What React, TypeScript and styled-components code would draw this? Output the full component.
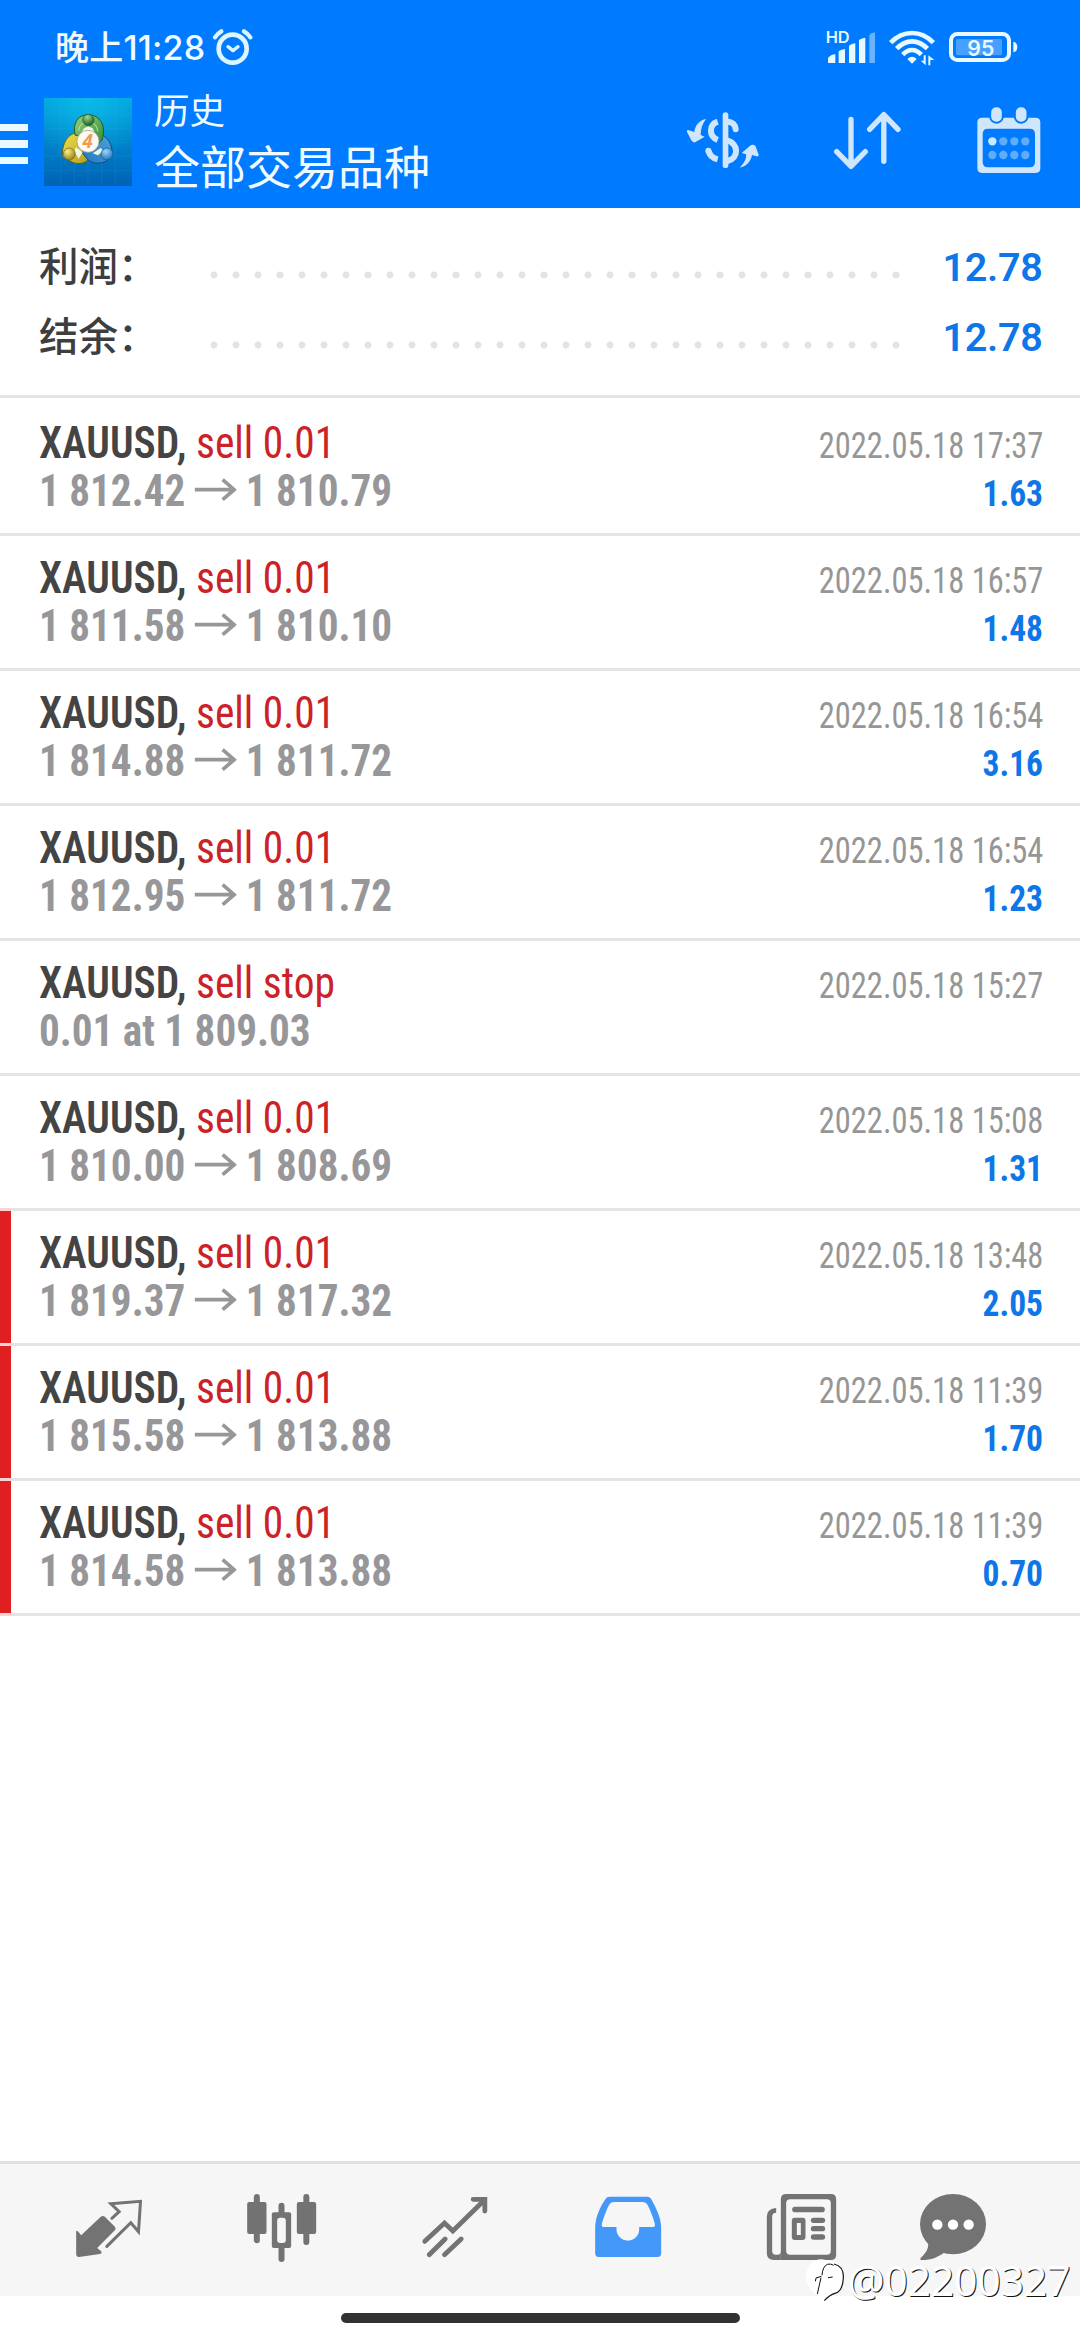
import React from 'react';
import styled, { createGlobalStyle } from 'styled-components';

const BLUE = '#007aff';
const GRAY = '#737373';
const CJK = "'Noto Sans CJK SC', sans-serif";

const Global = createGlobalStyle`
  html, body { margin: 0; background: #fff; }
  *, *::before, *::after { box-sizing: border-box; }
  svg { display: block; flex: none; }
`;

const Screen = styled.div`
  position: relative;
  display: flex;
  flex-direction: column;
  width: 1080px;
  height: 2340px;
  overflow: hidden;
  background: #fff;
  font-family: Roboto, ${CJK};
  white-space: nowrap;
`;

/* ---------- header ---------- */

const Header = styled.header`
  flex: none;
  height: 208px;
  background: ${BLUE};
  color: #f0fbff;
`;

const StatusBar = styled.div`
  display: flex;
  align-items: center;
  height: 94px;
  padding: 0 62px 0 55px;
`;

const Clock = styled.span`
  width: 149px;
  height: 92px;
  margin-right: 8px;
  font: 500 34px/94px Inter, ${CJK};
  letter-spacing: 0.2px;
`;

const StatusIcons = styled.div`
  display: flex;
  align-items: center;
  margin-left: auto;
  gap: 11px;
`;

const Toolbar = styled.div`
  display: flex;
  align-items: center;
  height: 96px;
  padding-right: 36px;
`;

const MenuButton = styled.div`
  display: flex;
  flex-direction: column;
  gap: 9.3px;
  width: 27.5px;
  margin: 4px 16.5px 0 0;
`;

const MenuLine = styled.i`
  height: 7.3px;
  background: #e9f9ff;
`;

const Titles = styled.div`
  margin: -4px auto 0 22px;
  font-family: ${CJK};
`;

const Caption = styled.div`
  font-size: 35.5px;
  line-height: 48px;
`;

const Title = styled.div`
  font-size: 46px;
  line-height: 62px;
`;

const Actions = styled.div`
  display: flex;
  align-items: center;
  gap: 70px;
  margin-top: -3px;
`;

/* ---------- summary ---------- */

const Summary = styled.section`
  flex: none;
  height: 190px;
  padding: 24px 37.5px 0 39px;
  border-bottom: 3px solid #e4e4e4;
`;

const SummaryRow = styled.div`
  display: flex;
  align-items: center;
  height: 70px;
`;

const SummaryLabel = styled.span`
  width: 163.5px;
  margin-top: -6px;
  font: 500 39.5px/70px ${CJK};
  color: #3e3e3e;
`;

const Dots = styled.span`
  width: 704px;
  height: 8px;
  margin-top: 15px;
  background: radial-gradient(circle at 50% 50%, #e3e3e3 3.1px, transparent 3.9px) 0 0 / 22px 8px repeat-x;
`;

const SummaryValue = styled.span`
  margin: 2px 0 0 auto;
  font: 600 39.5px/70px Roboto, sans-serif;
  letter-spacing: -0.3px;
  color: #0f76e8;
`;

/* ---------- deals ---------- */

const List = styled.section`
  flex: 1;
  padding-top: 3px;
`;

const Row = styled.article<{ $marked?: boolean; $edge?: boolean }>`
  height: 135px;
  padding: 19px 37px 0 39px;
  background:
    linear-gradient(${p => (p.$marked ? '#e01f20, #e01f20' : 'transparent, transparent')}) 0 0 / 11px 132px no-repeat,
    linear-gradient(${p => (p.$edge ? '#f9d3d3, #f9d3d3' : '#e4e4e4, #e4e4e4')}) 0 132px / 11px 3px no-repeat,
    linear-gradient(#e4e4e4, #e4e4e4) 0 132px / 100% 3px no-repeat;
  font-family: 'Roboto Condensed', Roboto, sans-serif;
`;

const Line = styled.div`
  display: flex;
  align-items: baseline;
  justify-content: space-between;
  height: 48px;
  line-height: 48px;
`;

const Squeeze = styled.span<{ $x: number; $from?: string }>`
  display: inline-block;
  transform: scaleX(${p => p.$x});
  transform-origin: ${p => p.$from || 'left'} center;
`;

const Deal = styled(Squeeze)`
  font-size: 43.5px;
  color: #cc2127;
`;

const Symbol = styled.b`
  font-weight: 650;
  color: #444;
`;

const Price = styled(Squeeze)`
  font-size: 43.5px;
  font-weight: 700;
  color: #97979a;
`;

const Time = styled(Squeeze)`
  font-size: 36.5px;
  font-weight: 400;
  color: #969696;
`;

const Profit = styled(Squeeze)`
  font-size: 36px;
  font-weight: 700;
  color: #0f76e8;
`;

const ArrowSvg = styled.svg`
  display: inline-block;
  width: 45.5px;
  height: 23.3px;
  margin: 0 9.5px 0 9px;
  vertical-align: 5px;
`;

/* ---------- bottom ---------- */

const TabBar = styled.nav`
  flex: none;
  display: flex;
  align-items: center;
  height: 135px;
  padding-left: 22px;
  border-top: 3px solid #e0e0e0;
  background: #f6f6f6;
`;

const Tab = styled.div<{ $w?: number }>`
  display: flex;
  justify-content: center;
  width: ${p => p.$w || 173}px;
`;

const GestureArea = styled.div`
  flex: none;
  display: flex;
  justify-content: center;
  height: 44px;
  padding-top: 17px;
`;

const GestureBar = styled.div`
  width: 399px;
  height: 10px;
  border-radius: 5px;
  background: #323232;
`;

const Watermark = styled.div`
  position: absolute;
  left: 805px;
  top: 2256px;
  display: flex;
  align-items: center;
  gap: 1px;
  font: 400 41px/48px 'Noto Sans', sans-serif;
  letter-spacing: -0.2px;
  color: #fff;
  text-shadow: 1px 1px 0 #111;
`;

/* ---------- icons ---------- */

const AlarmIcon = () => (
  <svg width="42" height="40" viewBox="636 80 126 120" fill="none" stroke="#dcf5ff" strokeLinecap="round">
    <circle cx="698" cy="145" r="42" strokeWidth="14" />
    <path d="M684 139L699 151L714 139" strokeWidth="10" strokeLinejoin="round" />
    <path d="M645 111Q652 100 664 93M751 111Q744 100 732 93" strokeWidth="13" />
  </svg>
);

const SignalIcon = () => (
  <svg width="53.3" height="40" viewBox="490 81 160 120" fill="#e8f9ff">
    <text x="495" y="129" fontFamily="Inter, sans-serif" fontSize="47" fontWeight="600" textLength="72" lengthAdjust="spacingAndGlyphs">HD</text>
    <path d="M502 189V174Q510 164 524 163V189ZM534 189V154Q542 148 553 147V189ZM565 189V137Q573 131 584 130V189ZM595 189V120Q603 114 614 113V189Z" />
    <path d="M626 189V105Q633 99 643 97V189Z" opacity=".45" />
  </svg>
);

const WifiIcon = () => (
  <svg width="48.7" height="40" viewBox="680 81 146 120" fill="none" stroke="#e8f9ff" strokeWidth="14">
    <path d="M688 128Q716 99 752 99Q788 99 816 128" />
    <path d="M706 146Q727 124 752 124Q777 124 798 146" />
    <path d="M724 164Q738 150 752 150Q766 150 780 164" />
    <path d="M738 177Q752 164 766 177L752 191Z" fill="#e8f9ff" stroke="none" />
    <path d="M793 166V196L778 182H787V166ZM801 196V166L819 180H807V196Z" fill="#e8f9ff" stroke="none" />
  </svg>
);

const BatteryIcon = () => (
  <svg width="70" height="40" viewBox="864 81 210 120">
    <rect x="873" y="102" width="174" height="78" rx="19" fill="none" stroke="#e8f9ff" strokeWidth="12" />
    <path d="M1060 125Q1072 127 1072 141Q1072 155 1060 157Z" fill="#e8f9ff" />
    <rect x="888" y="117" width="138" height="49" rx="4" fill="#fff" opacity=".28" />
    <text x="922" y="167" fill="#e8f9ff" fontFamily="Inter, sans-serif" fontSize="64" fontWeight="600" textLength="81" lengthAdjust="spacingAndGlyphs">95</text>
  </svg>
);

const AppIcon = () => (
  <svg width="88" height="88" viewBox="12 12 264 264">
    <defs>
      <linearGradient id="bg" x1="0" y1="0" x2="0" y2="1">
        <stop offset="0" stopColor="#00a4dc" />
        <stop offset=".5" stopColor="#0083cc" />
        <stop offset="1" stopColor="#0062b4" />
      </linearGradient>
      <radialGradient id="shine" cx=".5" cy="0" r=".7">
        <stop offset="0" stopColor="#10c4ee" stopOpacity=".7" />
        <stop offset="1" stopColor="#10c4ee" stopOpacity="0" />
      </radialGradient>
      <linearGradient id="gl" x1="0" y1="0" x2="1" y2="1"><stop offset="0" stopColor="#9ad07c" /><stop offset="1" stopColor="#2f8a3c" /></linearGradient>
      <linearGradient id="yl" x1="0" y1="0" x2="1" y2="1"><stop offset="0" stopColor="#efe050" /><stop offset="1" stopColor="#b39d1c" /></linearGradient>
      <linearGradient id="bb" x1="1" y1="0" x2="0" y2="1"><stop offset="0" stopColor="#4fa4dc" /><stop offset="1" stopColor="#2077bd" /></linearGradient>
      <radialGradient id="gr" cx=".4" cy=".25" r=".75"><stop offset="0" stopColor="#a4d88e" /><stop offset="1" stopColor="#155f26" /></radialGradient>
      <radialGradient id="ye" cx=".35" cy=".3" r=".75"><stop offset="0" stopColor="#f8f08c" /><stop offset="1" stopColor="#968010" /></radialGradient>
      <radialGradient id="bl" cx=".4" cy=".3" r=".75"><stop offset="0" stopColor="#9ad6fa" /><stop offset="1" stopColor="#1a72ba" /></radialGradient>
    </defs>
    <rect x="12" y="12" width="264" height="264" fill="url(#bg)" />
    <rect x="12" y="12" width="264" height="264" fill="url(#shine)" />
    <path d="M62 12V276M103 12V276M144 12V276M185 12V276M226 12V276M12 63H276M12 104H276M12 145H276M12 186H276M12 230H276" stroke="#5cc4f0" strokeWidth="1.5" opacity=".2" />
    <path d="M68 188C64 150 84 114 118 116L150 150L146 196C134 210 112 212 96 204Z" fill="url(#yl)" stroke="#5f6418" strokeWidth="3" />
    <path d="M168 116C204 122 222 158 214 184C206 206 166 218 142 196L124 172L176 150Z" fill="url(#bb)" stroke="#114a80" strokeWidth="3" />
    <path d="M106 124C96 92 112 62 145 62C180 62 200 96 186 138L168 156L112 124Z" fill="url(#gl)" stroke="#1a5c2a" strokeWidth="3" />
    <path d="M116 110C118 92 130 84 145 84C162 84 172 96 173 112" fill="none" stroke="#c2e8a8" strokeWidth="3" />
    <path d="M132 103L145 97L158 103L164 116H124ZM102 172L108 160L128 174L116 194ZM190 170L182 162L158 178L174 184Z" fill="#eef6e4" />
    <circle cx="145" cy="78" r="17" fill="url(#gr)" stroke="#17612a" strokeWidth="2" />
    <circle cx="88" cy="180" r="18" fill="url(#ye)" stroke="#7c6a14" strokeWidth="2" />
    <circle cx="201" cy="180" r="18" fill="url(#bl)" stroke="#145a98" strokeWidth="2" />
    <circle cx="144" cy="142" r="33" fill="#fdfaf5" stroke="#a9a788" strokeWidth="2.500" />
    <text x="143" y="162" textAnchor="middle" fontFamily="'Open Sans', sans-serif" fontStyle="italic" fontWeight="700" fontSize="56" fill="#f29a50">4</text>
  </svg>
);

const CurrencyIcon = () => (
  <svg width="76.7" height="60" viewBox="70 330 230 180" fill="#cfe6fd">
    <rect x="186" y="337" width="17" height="167" rx="8.5" />
    <g fill="none" stroke="#cfe6fd" strokeWidth="18">
      <path d="M200 365C215 365 224 374 225 388" strokeLinecap="round" />
      <path d="M171 365C144 374 144 409 171 420" />
      <path d="M144 452C146 468 155 474 171 478" />
      <path d="M200 421C234 432 236 474 200 483" />
      <path d="M143 452V453" strokeLinecap="round" />
    </g>
    <path d="M136 357C118 360 103 375 101 396L82 390Q77 390 79 396L92 421Q96 428 103 427L132 410L120 405C120 385 126 370 136 357Z" />
    <path d="M237 503C252 488 258 475 256 463L243 459L270 436Q277 432 284 437L294 464Q294 470 288 469L274 465C270 485 256 500 237 503Z" />
  </svg>
);

const SortIcon = () => (
  <svg width="73.3" height="63.3" viewBox="506 330 220 190" fill="none" stroke="#cfe6fd" strokeWidth="16" strokeLinecap="round" strokeLinejoin="round">
    <path d="M566 361V500M523 458L566 502L609 458" />
    <path d="M664.500 487V350M622 391L664.500 347L707 391" />
  </svg>
);

const CalendarIcon = () => (
  <svg width="70" height="72.300" viewBox="941 313 210 217">
    <path fillRule="evenodd" fill="#cfe6fd" d="M965 354H1126Q1140 354 1140 368V506Q1140 520 1126 520H965Q951 520 951 506V368Q951 354 965 354ZM983 387Q967 387 967 403V487Q967 503 983 503H1108Q1124 503 1124 487V403Q1124 387 1108 387Z" />
    {[1008.5, 1082.5].map(x => (
      <rect key={x} x={x - 19} y="320" width="38" height="49" rx="18" fill="#cfe6fd" stroke={BLUE} strokeWidth="6" />
    ))}
    {[425, 466].map(y => [996, 1029, 1062, 1095].map(x => (
      <circle key={`${x}${y}`} cx={x} cy={y} r="12.500" fill={x === 996 && y === 425 ? '#c4ebff' : '#5fadf9'} />
    )))}
  </svg>
);

const Arrow = () => (
  <ArrowSvg viewBox="585 667 130 70" preserveAspectRatio="none" fill="none" stroke="#97979a" strokeWidth="11">
    <path d="M587 702H706M671 672L706 702L671 732" />
  </ArrowSvg>
);

const QuotesIcon = () => (
  <svg width="80" height="80" viewBox="25.5 30 240 240">
    <path fill={GRAY} d="M47 154Q48 150 52 154L62 166L120 111Q127 105 133 110L163 140Q168 146 163 151L110 204L122 214Q126 220 118 222L56 231Q47 231 47 222Z" />
    <path fill="none" stroke={GRAY} strokeWidth="9" strokeLinecap="round" d="M154 115L176 95L151 71L240 64L234 155L211 128L139 199" />
  </svg>
);

const CandlesIcon = () => (
  <svg width="80" height="80" viewBox="544.5 30 240 240" fill={GRAY}>
    <rect x="560" y="66" width="58" height="96" rx="6" />
    <rect x="580" y="42" width="18" height="148" rx="9" />
    <rect x="709" y="66" width="58" height="96" rx="6" />
    <rect x="728.500" y="42" width="18" height="153" rx="9" />
    <rect x="654" y="68" width="18" height="60" rx="9" />
    <rect x="654" y="170" width="18" height="76" rx="9" />
    <rect x="634" y="97" width="58" height="107" rx="6" />
    <rect x="650" y="113" width="26" height="76" rx="9" fill="#f6f6f6" />
  </svg>
);

const TradeIcon = () => (
  <svg width="80" height="80" viewBox="43.5 30 240 240" fill="none" stroke={GRAY} strokeWidth="14.500">
    <path d="M73 184L132 129L157 153L252 60" strokeLinecap="round" />
    <path d="M218 58H253V93" strokeLinecap="round" />
    <path d="M86 224L134 177M132 224L182 177" strokeLinecap="round" />
  </svg>
);

const HistoryIcon = () => (
  <svg width="80" height="80" viewBox="562.5 30 240 240">
    <path
      fill="#4499f8"
      fillRule="evenodd"
      d="M627 50H740Q748 50 752 57C770 90 782 115 782 145V220Q782 231 771 231H595Q584 231 584 220V145C584 115 596 85 615 57Q619 50 627 50ZM640 66Q630 66 626 74C617 92 609 112 604 131Q602 141 611 141H648V148A34 34 0 0 0 716 148V141H756Q765 141 763 131C758 112 750 92 741 74Q737 66 727 66Z"
    />
  </svg>
);

const NewsIcon = () => (
  <svg width="80" height="80" viewBox="61.5 30 240 240" fill={GRAY}>
    <path fillRule="evenodd" d="M137 42H271Q287 42 287 58V224Q287 240 271 240H121V58Q121 42 137 42ZM149 58Q137 58 137 70V212Q137 224 149 224H259Q271 224 271 212V70Q271 58 259 58Z" />
    <path d="M107 84V98Q95 98 95 110V213Q95 224 106 224H112Q121 224 121 213V240H100Q79 240 79 219V110Q79 86 107 84Z" />
    <rect x="155" y="80" width="98" height="17" rx="8.500" />
    <path fillRule="evenodd" d="M163 113H186Q195 113 195 122V171Q195 180 186 180H163Q154 180 154 171V122Q154 113 163 113ZM169 129V165H181V129Z" />
    {[113, 138, 163].map(y => <rect key={y} x="211" y={y} width="43" height="16" rx="8" />)}
  </svg>
);

const ChatIcon = () => (
  <svg width="80" height="80" viewBox="519 30 240 240" fill={GRAY}>
    <ellipse cx="639" cy="132.500" rx="99" ry="90.500" />
    <path d="M562 180C570 200 560 218 542 234Q539 240 545 240C575 240 592 232 612 218Z" />
    {[592, 639, 686].map(x => <circle key={x} cx={x} cy="134" r="15.500" fill="#fff" />)}
  </svg>
);

const WatermarkLogo = () => (
  <svg width="41.700" height="45" viewBox="195 245 125 135" fill="none" stroke="#111" strokeWidth="3.500">
    <path d="M245 249C215 249 199 272 199 300C199 335 222 358 250 358L253 372Q268 356 285 351Q310 342 310 300Q310 262 280 255Z" fill="#fff" stroke="none" />
    <path d="M282 263Q312 270 310 305Q308 345 285 351Q268 356 253 373" />
    <path d="M246 297Q248 270 262 264Q272 261 281 267M244 300L228 305L226 315M243 304L232 353M264 304L278 302" strokeWidth="3" />
  </svg>
);

/* ---------- data ---------- */

interface DealItem {
  action: string;
  open: string;
  close?: string;
  time: string;
  profit?: string;
  marked?: boolean;
}

const deals: DealItem[] = [
  { action: 'sell 0.01', open: '1 812.42', close: '1 810.79', time: '2022.05.18 17:37', profit: '1.63' },
  { action: 'sell 0.01', open: '1 811.58', close: '1 810.10', time: '2022.05.18 16:57', profit: '1.48' },
  { action: 'sell 0.01', open: '1 814.88', close: '1 811.72', time: '2022.05.18 16:54', profit: '3.16' },
  { action: 'sell 0.01', open: '1 812.95', close: '1 811.72', time: '2022.05.18 16:54', profit: '1.23' },
  { action: 'sell stop', open: '0.01 at 1 809.03', time: '2022.05.18 15:27' },
  { action: 'sell 0.01', open: '1 810.00', close: '1 808.69', time: '2022.05.18 15:08', profit: '1.31' },
  { action: 'sell 0.01', open: '1 819.37', close: '1 817.32', time: '2022.05.18 13:48', profit: '2.05', marked: true },
  { action: 'sell 0.01', open: '1 815.58', close: '1 813.88', time: '2022.05.18 11:39', profit: '1.70', marked: true },
  { action: 'sell 0.01', open: '1 814.58', close: '1 813.88', time: '2022.05.18 11:39', profit: '0.70', marked: true },
];

const totals = [
  { label: '利润：', value: '12.78' },
  { label: '结余：', value: '12.78' },
];

export default function App() {
  return (
    <>
      <Global />
      <Screen>
        <Header>
          <StatusBar>
            <Clock>晚上11:28</Clock>
            <AlarmIcon />
            <StatusIcons>
              <SignalIcon />
              <WifiIcon />
              <BatteryIcon />
            </StatusIcons>
          </StatusBar>
          <Toolbar>
            <MenuButton><MenuLine /><MenuLine /><MenuLine /></MenuButton>
            <AppIcon />
            <Titles>
              <Caption>历史</Caption>
              <Title>全部交易品种</Title>
            </Titles>
            <Actions>
              <CurrencyIcon />
              <SortIcon />
              <CalendarIcon />
            </Actions>
          </Toolbar>
        </Header>

        <Summary>
          {totals.map(t => (
            <SummaryRow key={t.label}>
              <SummaryLabel>{t.label}</SummaryLabel>
              <Dots />
              <SummaryValue>{t.value}</SummaryValue>
            </SummaryRow>
          ))}
        </Summary>

        <List>
          {deals.map((d, i) => (
            <Row key={i} $marked={d.marked} $edge={d.marked || deals[i + 1]?.marked}>
              <Line>
                <Deal $x={0.953}><Symbol>XAUUSD,</Symbol> {d.action}</Deal>
                <Time $x={0.89} $from="right">{d.time}</Time>
              </Line>
              <Line>
                <Price $x={0.946}>{d.open}{d.close && <><Arrow />{d.close}</>}</Price>
                {d.profit && <Profit $x={0.93} $from="right">{d.profit}</Profit>}
              </Line>
            </Row>
          ))}
        </List>

        <TabBar>
          <Tab><QuotesIcon /></Tab>
          <Tab><CandlesIcon /></Tab>
          <Tab><TradeIcon /></Tab>
          <Tab><HistoryIcon /></Tab>
          <Tab><NewsIcon /></Tab>
          <Tab $w={132}><ChatIcon /></Tab>
        </TabBar>
        <GestureArea><GestureBar /></GestureArea>

        <Watermark><WatermarkLogo /><span>@02200327</span></Watermark>
      </Screen>
    </>
  );
}
